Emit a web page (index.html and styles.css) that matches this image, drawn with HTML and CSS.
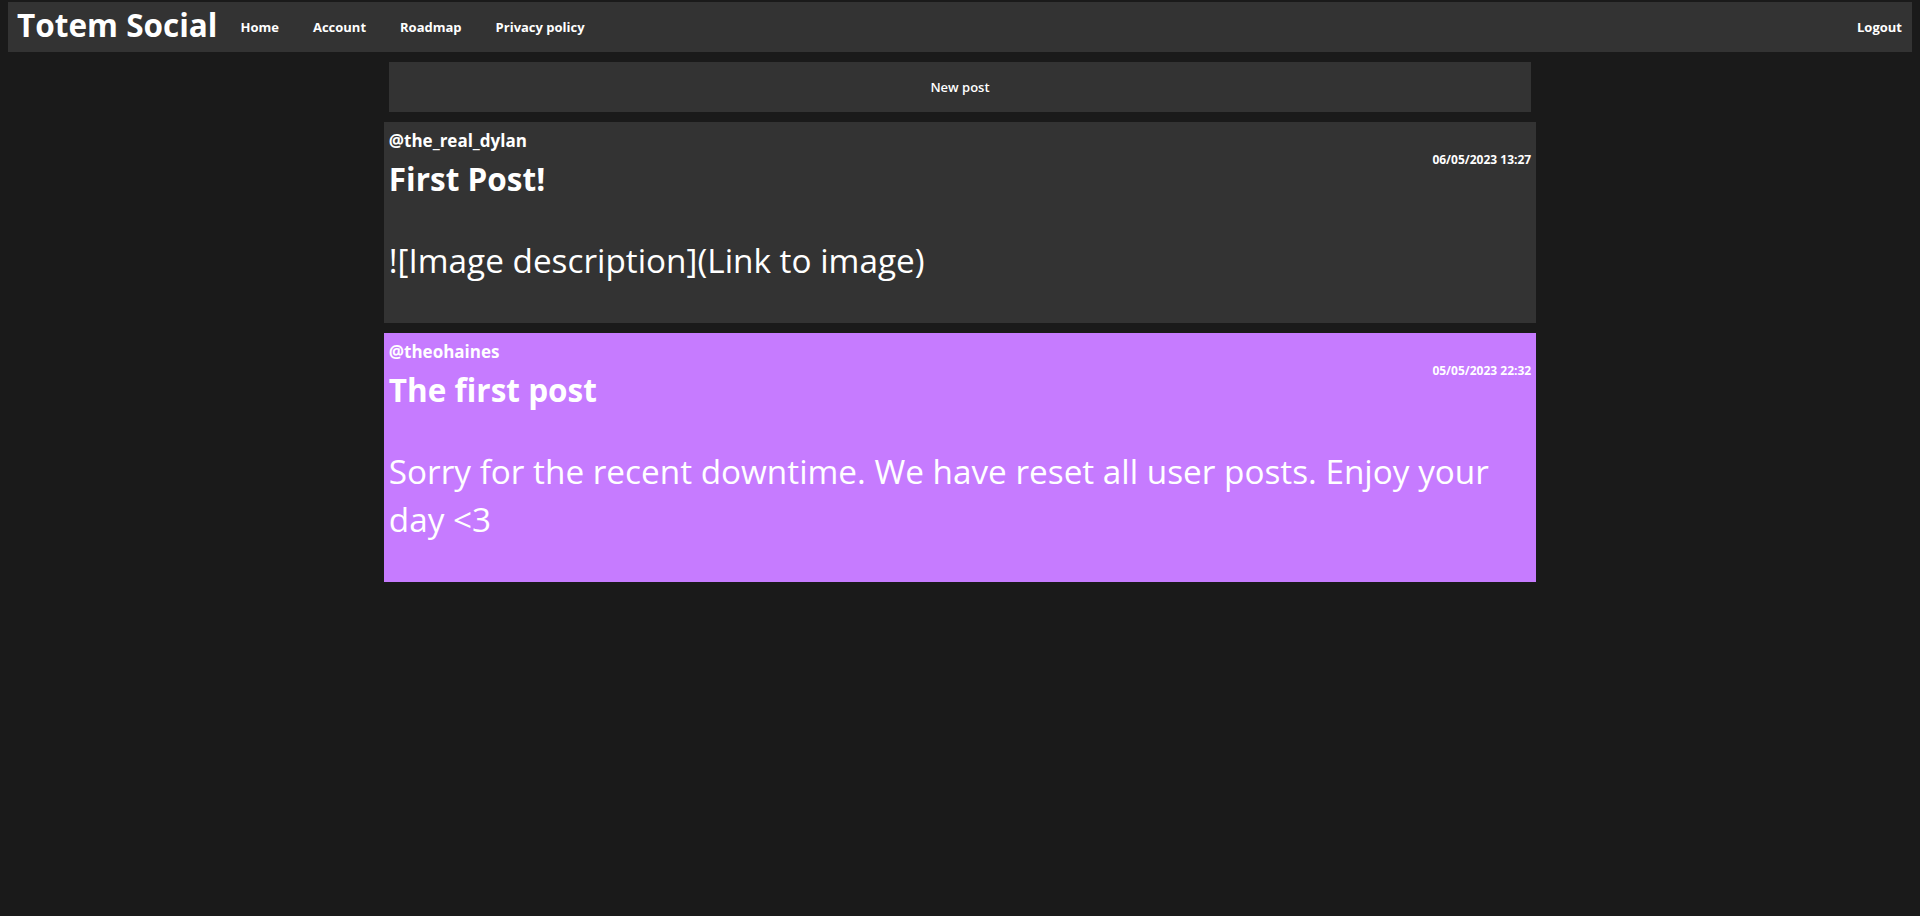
FILE: index.html
```html
<!DOCTYPE html>
<html lang="en">
<head>
<meta charset="utf-8">
<title>Totem Social</title>
<link rel="stylesheet" href="styles.css">
</head>
<body>
<nav class="topnav">
  <a class="brand" href="#">Totem Social</a>
  <ul class="nav-links">
    <li><a href="#">Home</a></li>
    <li><a href="#">Account</a></li>
    <li><a href="#">Roadmap</a></li>
    <li><a href="#">Privacy policy</a></li>
  </ul>
  <a class="logout" href="#">Logout</a>
</nav>
<main class="feed">
  <button class="new-post" type="button">New post</button>
  <article class="post">
    <div class="post-author">@the_real_dylan</div>
    <div class="post-date">06/05/2023 13:27</div>
    <h1 class="post-title">First Post!</h1>
    <p class="post-body">![Image description](Link to image)</p>
  </article>
  <article class="post post-featured">
    <div class="post-author">@theohaines</div>
    <div class="post-date">05/05/2023 22:32</div>
    <h1 class="post-title">The first post</h1>
    <p class="post-body">Sorry for the recent downtime. We have reset all user posts. Enjoy your day &lt;3</p>
  </article>
</main>
</body>
</html>
```
FILE: styles.css
```css
html {
  background: #1a1a1a;
}

body {
  margin: 2px 8px 8px;
  background: #1a1a1a;
  color: #ffffff;
  font-family: "Open Sans", "Noto Sans", sans-serif;
}

.topnav {
  display: flex;
  align-items: center;
  height: 50px;
  padding: 0 10px 0 9px;
  background: #333333;
}

.brand {
  margin-right: 6px;
  padding-bottom: 4px;
  color: #ffffff;
  font-size: 31.5px;
  font-weight: 700;
  line-height: 44px;
  text-decoration: none;
}

.nav-links {
  display: flex;
  flex: 1;
  margin: 0;
  padding: 0;
  list-style: none;
}

.nav-links a {
  display: block;
  padding: 0 17px;
  color: #ffffff;
  font-size: 13px;
  font-weight: 700;
  line-height: 18px;
  text-decoration: none;
}

.logout {
  color: #ffffff;
  font-size: 13px;
  font-weight: 700;
  line-height: 18px;
  text-decoration: none;
}

.feed {
  display: flex;
  flex-direction: column;
  align-items: center;
  gap: 10px;
  padding-top: 10px;
}

.new-post {
  width: 60%;
  height: 50px;
  border: none;
  background: #333333;
  color: #ffffff;
  font-family: "Open Sans", "Noto Sans", sans-serif;
  font-size: 13px;
  font-weight: 600;
  cursor: pointer;
}

.post {
  width: 60%;
  padding: 6px 5px 39px;
  background: #333333;
}

.post-featured {
  background: #c67bff;
}

.post-author {
  font-size: 17px;
  font-weight: 700;
  line-height: 25px;
}

.post-date {
  font-size: 12px;
  font-weight: 700;
  line-height: 14px;
  text-align: right;
}

.post-title {
  margin: 0;
  font-size: 31.5px;
  font-weight: 700;
  line-height: 24px;
}

.post-body {
  margin: 45px 0 0;
  font-size: 33.3px;
  line-height: 48px;
}
```
